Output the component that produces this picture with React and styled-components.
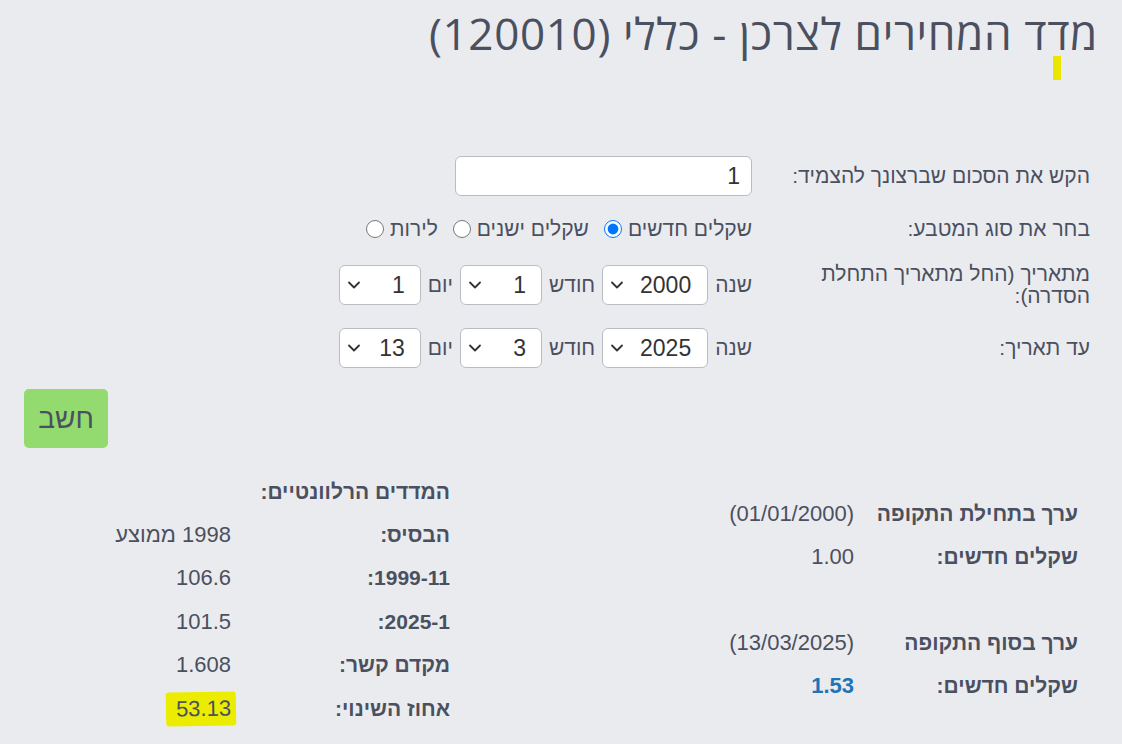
import React from 'react';
import styled, { createGlobalStyle } from 'styled-components';
import { ChevronDown } from 'lucide-react';

const GlobalStyle = createGlobalStyle`
  html, body {
    margin: 0;
    padding: 0;
    background: #eaebef;
  }
  body {
    direction: rtl;
    font-family: "Liberation Sans", Arial, sans-serif;
    color: #4a5060;
  }
`;

const Page = styled.div`
  width: 1122px;
  min-height: 744px;
  background: #eaebef;
  overflow: hidden;
`;

const Title = styled.h1`
  margin: 0;
  padding: 9px 24px 0 0;
  font-family: "Open Sans", "DejaVu Sans", sans-serif;
  font-weight: 400;
  font-size: 44px;
  line-height: 48px;
  color: #4a5060;
  letter-spacing: 0.65px;
`;

const Marker = styled.span`
  display: block;
  width: 8px;
  height: 24px;
  margin: -1px 61px 0 0;
  background: #ebe600;
`;

const Form = styled.div`
  margin-top: 76px;
  padding-right: 32px;
  font-size: 21px;
`;

const FormRow = styled.div`
  display: grid;
  grid-template-columns: 298px auto;
  column-gap: 40px;
  align-items: center;
  margin-top: ${p => p.$top || 0}px;
  min-height: ${p => p.$h || 40}px;
`;

const Label = styled.div`
  line-height: 22px;
  text-align: right;
`;

const Field = styled.div`
  display: flex;
  align-items: center;
  gap: ${p => p.$gap ?? 7}px;
`;

const AmountInput = styled.input`
  box-sizing: border-box;
  width: 297px;
  height: 40px;
  border: 1px solid #b9bcc3;
  border-radius: 6px;
  background: #fff;
  padding: 0 11px;
  direction: rtl;
  text-align: right;
  font-family: "Liberation Sans", Arial, sans-serif;
  font-size: 23px;
  color: #333;
  outline: none;
`;

const RadioLabel = styled.label`
  display: flex;
  align-items: center;
  gap: 6px;
  font-size: 21px;
  margin-left: 15px;
`;

const Radio = styled.input`
  width: 18px;
  height: 18px;
  margin: 0;
`;

const SelectBox = styled.div`
  position: relative;
  box-sizing: border-box;
  width: ${p => p.$w}px;
  height: 40px;
  border: 1px solid #b9bcc3;
  border-radius: 6px;
  background: #fff;
  display: flex;
  align-items: center;
  padding-right: ${p => p.$pr || 22}px;
  font-size: 23px;
  color: #333;
`;

const Chevron = styled(ChevronDown)`
  position: absolute;
  left: 4px;
  top: 50%;
  transform: translateY(-50%);
  color: #333;
`;

const ButtonRow = styled.div`
  display: flex;
  justify-content: flex-end;
  padding-left: 24px;
  margin-top: 21px;
`;

const CalcButton = styled.button`
  width: 84px;
  height: 59px;
  border: none;
  border-radius: 5px;
  background: #93db6e;
  color: #4a5060;
  font-family: "Liberation Sans", Arial, sans-serif;
  font-size: 28px;
  cursor: pointer;
`;

const Results = styled.div`
  display: grid;
  grid-template-columns: 628px auto;
  align-items: center;
  margin-top: 22px;
  padding-right: 44px;
  font-size: 21px;
`;

const ResultTable = styled.div`
  display: grid;
  grid-template-columns: ${p => p.$label}px auto;
  grid-auto-rows: ${p => p.$row}px;
  align-items: center;
`;

const Heading = styled.div`
  grid-column: 1 / -1;
  font-weight: 700;
`;

const Key = styled.div`
  font-weight: 700;
  white-space: nowrap;
`;

const Value = styled.div`
  white-space: nowrap;
  font-size: 22px;
  color: ${p => (p.$accent ? '#1f73b7' : '#4a5060')};
  font-weight: ${p => (p.$accent ? 700 : 400)};
`;

const Highlight = styled.span`
  display: inline-block;
  background: #ecec00;
  padding: 4px 5px 4px 10px;
  margin-right: -5px;
  border-radius: 3px;
  transform: rotate(-1deg);
`;

const Select = ({ value, w, pr }) => (
  <SelectBox $w={w} $pr={pr}>
    {value}
    <Chevron size={20} strokeWidth={2.2} />
  </SelectBox>
);

const DateField = ({ y, m, d }) => (
  <Field>
    <span>שנה</span>
    <Select value={y} w={106} pr={16} />
    <span>חודש</span>
    <Select value={m} w={82} pr={15} />
    <span>יום</span>
    <Select value={d} w={82} pr={15} />
  </Field>
);

export default function App() {
  return (
    <Page>
      <GlobalStyle />
      <Title>מדד המחירים לצרכן - כללי (120010)</Title>
      <Marker />

      <Form>
        <FormRow $h={40}>
          <Label>הקש את הסכום שברצונך להצמיד:</Label>
          <Field>
            <AmountInput defaultValue="1" />
          </Field>
        </FormRow>
        <FormRow $top={19} $h={28}>
          <Label>בחר את סוג המטבע:</Label>
          <Field $gap={0}>
            <RadioLabel>
              שקלים חדשים
              <Radio type="radio" name="cur" defaultChecked />
            </RadioLabel>
            <RadioLabel>
              שקלים ישנים
              <Radio type="radio" name="cur" />
            </RadioLabel>
            <RadioLabel>
              לירות
              <Radio type="radio" name="cur" />
            </RadioLabel>
          </Field>
        </FormRow>
        <FormRow $top={20} $h={44}>
          <Label>מתאריך (החל מתאריך התחלת הסדרה):</Label>
          <DateField y="2000" m="1" d="1" />
        </FormRow>
        <FormRow $top={21} $h={40}>
          <Label>עד תאריך:</Label>
          <DateField y="2025" m="3" d="13" />
        </FormRow>
      </Form>

      <ButtonRow>
        <CalcButton>חשב</CalcButton>
      </ButtonRow>

      <Results>
        <ResultTable $label={224} $row={43}>
          <Key>ערך בתחילת התקופה</Key>
          <Value>(01/01/2000)</Value>
          <Key>שקלים חדשים:</Key>
          <Value>1.00</Value>
          <div />
          <div />
          <Key>ערך בסוף התקופה</Key>
          <Value>(13/03/2025)</Value>
          <Key>שקלים חדשים:</Key>
          <Value $accent>1.53</Value>
        </ResultTable>

        <ResultTable $label={219} $row={43.4}>
          <Heading>המדדים הרלוונטיים:</Heading>
          <Key>הבסיס:</Key>
          <Value>1998 ממוצע</Value>
          <Key>1999-11:</Key>
          <Value>106.6</Value>
          <Key>2025-1:</Key>
          <Value>101.5</Value>
          <Key>מקדם קשר:</Key>
          <Value>1.608</Value>
          <Key>אחוז השינוי:</Key>
          <Value>
            <Highlight>53.13</Highlight>
          </Value>
        </ResultTable>
      </Results>
    </Page>
  );
}
